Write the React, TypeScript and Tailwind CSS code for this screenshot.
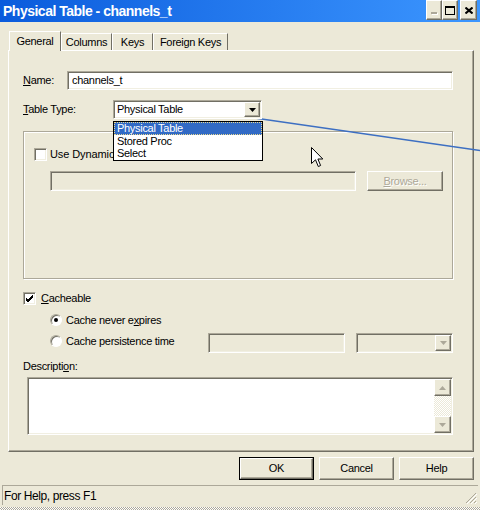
const raised =
  "border border-t-white border-l-white border-r-[#716f64] border-b-[#716f64] shadow-[inset_-1px_-1px_0_#aca899]";
const sunken =
  "border border-t-[#aca899] border-l-[#aca899] border-r-white border-b-white shadow-[inset_1px_1px_0_#716f64,inset_-1px_-1px_0_#f1efe2]";

function Check({ checked }: { checked?: boolean }) {
  return (
    <div className={`w-[13px] h-[13px] bg-white flex items-center justify-center ${sunken}`}>
      {checked && (
        <svg width="9" height="9" viewBox="0 0 9 9">
          <path d="M1 4 L3 6 L8 1 M1 5 L3 7 L8 2 M1 6 L3 8 L8 3" stroke="#000" strokeWidth="1" fill="none" />
        </svg>
      )}
    </div>
  );
}

function Radio({ on }: { on?: boolean }) {
  return (
    <div className="w-[12px] h-[12px] rounded-full bg-white border border-t-[#aca899] border-l-[#aca899] border-r-white border-b-white shadow-[inset_1px_1px_0_#716f64] flex items-center justify-center">
      {on && <div className="w-[4px] h-[4px] rounded-full bg-black" />}
    </div>
  );
}

function Arrow({ up, grey }: { up?: boolean; grey?: boolean }) {
  return (
    <svg width="7" height="4" viewBox="0 0 7 4">
      <path d={up ? "M3.5 0 L7 4 L0 4 Z" : "M0 0 L7 0 L3.5 4 Z"} fill={grey ? "#aca899" : "#000"} />
    </svg>
  );
}

function Button({ children, primary }: { children: React.ReactNode; primary?: boolean }) {
  return (
    <div className={`w-[75px] h-[23px] ${primary ? "outline outline-1 outline-black -outline-offset-1" : ""}`}>
      <div className={`w-full h-full flex items-center justify-center ${primary ? "border-[2px] border-t-white border-l-white border-r-[#716f64] border-b-[#716f64] shadow-[inset_-1px_-1px_0_#aca899]" : raised}`}>
        {children}
      </div>
    </div>
  );
}

export default function App() {
  return (
    <div className="relative w-[480px] h-[510px] overflow-hidden bg-[#ece9d8] text-[11px] leading-none text-black tracking-[-0.3px] font-['Liberation_Sans',Arial,sans-serif]">
      {/* title bar */}
      <div className="flex h-[22px] bg-linear-to-r from-[#0a5bdc] to-[#3c96ff]">
        <span className="pl-[3px] pt-[4px] text-white font-bold text-[14px] tracking-[-0.5px]">
          Physical Table - channels_t
        </span>
        <div className="ml-auto mr-[3px] flex">
          <div className={`w-[16px] h-[20px] bg-[#ece9d8] flex items-end justify-center pb-[5px] ${raised}`}>
            <div className="w-[6px] h-[2px] bg-[#aca899] shadow-[1px_1px_0_white]" />
          </div>
          <div className={`w-[16px] h-[20px] bg-[#ece9d8] flex items-center justify-center ${raised}`}>
            <div className="w-[10px] h-[9px] border border-black border-t-2" />
          </div>
          <div className={`ml-[2px] w-[17px] h-[20px] bg-[#ece9d8] flex items-center justify-center ${raised}`}>
            <svg width="8" height="7" viewBox="0 0 8 7">
              <path d="M0.5 0.5 L7.5 6.5 M7.5 0.5 L0.5 6.5" stroke="#000" strokeWidth="2" />
            </svg>
          </div>
        </div>
      </div>

      {/* tabs */}
      <div className="mt-[9px] ml-[9px] flex items-end h-[19px]">
        <div className="relative z-10 mb-[-1px] w-[52px] h-[20px] bg-[#ece9d8] border-t border-l border-t-white border-l-white border-r border-r-[#716f64] flex items-center justify-center">
          General
        </div>
        <div className="w-[51px] h-[17px] border-t border-l border-t-white border-l-white border-r border-r-[#716f64] flex items-center justify-center">
          Columns
        </div>
        <div className="w-[41px] h-[17px] border-t border-l border-t-white border-l-white border-r border-r-[#716f64] flex items-center justify-center">
          Keys
        </div>
        <div className="w-[75px] h-[17px] border-t border-l border-t-white border-l-white border-r border-r-[#716f64] flex items-center justify-center">
          Foreign Keys
        </div>
      </div>

      {/* tab panel */}
      <div className={`ml-[8px] w-[466px] h-[402px] pl-[14px] pt-[20px] flex flex-col ${raised}`}>
        <div className="flex items-center h-[19px]">
          <span className="w-[44px]"><u>N</u>ame:</span>
          <div className={`w-[386px] h-[19px] bg-white flex items-center pl-[4px] ${sunken}`}>channels_t</div>
        </div>

        <div className="mt-[10px] flex items-center h-[19px]">
          <span className="w-[90px]"><u>T</u>able Type:</span>
          <div className="relative z-20">
            <div className={`w-[149px] h-[19px] bg-white flex items-center pl-[3px] pr-[1px] ${sunken}`}>
              <span className="flex-1">Physical Table</span>
              <div className={`w-[16px] h-[15px] bg-[#ece9d8] flex items-center justify-center ${raised}`}>
                <Arrow />
              </div>
            </div>
            <div className="absolute left-0 top-[21px] w-[150px] h-[40px] bg-white border border-black flex flex-col">
              <div className="h-[13px] bg-[#316ac5] text-white flex items-center pl-[2px] border border-dotted border-[#e8d890]">Physical Table</div>
              <div className="h-[13px] flex items-center pl-[3px]">Stored Proc</div>
              <div className="h-[13px] flex items-center pl-[3px]">Select</div>
            </div>
          </div>
        </div>

        <div className="mt-[12px] w-[430px] h-[148px] border border-[#aca899] shadow-[inset_1px_1px_0_white,1px_1px_0_white] pl-[10px] pt-[16px] flex flex-col">
          <div className="flex items-center h-[13px]">
            <Check />
            <span className="ml-[3px] tracking-[-0.1px]">Use Dynamic</span>
          </div>
          <div className="mt-[10px] ml-[16px] flex">
            <div className={`w-[306px] h-[20px] bg-[#ece9d8] ${sunken}`} />
            <div className={`ml-[11px] w-[76px] h-[20px] flex items-center justify-center text-[#aca899] [text-shadow:1px_1px_0_white] ${raised}`}>
              <span><u>B</u>rowse...</span>
            </div>
          </div>
        </div>

        <div className="mt-[12px] flex items-center h-[14px]">
          <Check checked />
          <span className="ml-[5px]"><u>C</u>acheable</span>
        </div>

        <div className="mt-[8px] pl-[27px] flex items-center h-[14px]">
          <Radio on />
          <span className="ml-[4px]">Cache never e<u>x</u>pires</span>
        </div>

        <div className="mt-[6px] pl-[27px] flex items-start h-[20px]">
          <div className="w-[158px] h-[16px] flex items-center">
            <Radio />
            <span className="ml-[4px]">Cache persistence time</span>
          </div>
          <div className={`w-[137px] h-[20px] bg-[#ece9d8] ${sunken}`} />
          <div className={`ml-[11px] w-[97px] h-[20px] bg-[#ece9d8] flex justify-end items-center pr-[1px] ${sunken}`}>
            <div className={`w-[16px] h-[16px] bg-[#ece9d8] flex items-center justify-center ${raised}`}>
              <Arrow grey />
            </div>
          </div>
        </div>

        <div className="mt-[6px] flex items-center h-[14px]">
          <span>Descripti<u>o</u>n:</span>
        </div>

        <div className={`mt-[4px] ml-[4px] w-[426px] h-[58px] bg-white flex justify-end p-[1px] ${sunken}`}>
          <div className="w-[17px] h-full flex flex-col">
            <div className={`h-[17px] bg-[#ece9d8] flex items-center justify-center ${raised}`}>
              <Arrow up grey />
            </div>
            <div className="flex-1 bg-[repeating-conic-gradient(#ece9d8_0_25%,#ffffff_0_50%)] bg-[length:2px_2px]" />
            <div className={`h-[17px] bg-[#ece9d8] flex items-center justify-center ${raised}`}>
              <Arrow grey />
            </div>
          </div>
        </div>
      </div>

      {/* buttons */}
      <div className="mt-[5px] pr-[6px] flex justify-end gap-[5px]">
        <Button primary>OK</Button>
        <Button>Cancel</Button>
        <Button>Help</Button>
      </div>

      {/* status bar */}
      <div className="mt-[5px] mx-[2px] h-[20px] flex items-center pl-[1px] text-[12px] tracking-[-0.4px] border-t border-l border-t-[#aca899] border-l-[#aca899] relative">
        For Help, press F1
        <svg className="absolute right-[1px] bottom-[1px]" width="12" height="12" viewBox="0 0 12 12">
          <path d="M11 1 L1 11 M11 5 L5 11 M11 9 L9 11" stroke="#aca899" strokeWidth="1" />
          <path d="M12 2 L2 12 M12 6 L6 12 M12 10 L10 12" stroke="#ffffff" strokeWidth="1" />
        </svg>
      </div>
      <div className="mt-[2px] h-[3px] bg-[repeating-conic-gradient(#aca899_0_25%,#ffffff_0_50%)] bg-[length:2px_2px]" />

      {/* mouse pointer */}
      <svg className="absolute left-[311px] top-[147px] pointer-events-none" width="13" height="22" viewBox="0 0 13 22">
        <path d="M0.5 0.5 L0.5 16.5 L4.5 12.8 L7.3 19.5 L9.6 18.5 L6.9 12 L11.8 12 Z" fill="#fff" stroke="#000" strokeWidth="1" />
      </svg>

      {/* annotation arrow */}
      <svg className="absolute inset-0 pointer-events-none" width="480" height="510" viewBox="0 0 480 510">
        <path d="M216.5 112.5 L480 150.5 M216.5 112.5 L227 108 M216.5 112.5 L225 117.5" stroke="#3d6fc2" strokeWidth="1.4" fill="none" />
      </svg>
    </div>
  );
}
